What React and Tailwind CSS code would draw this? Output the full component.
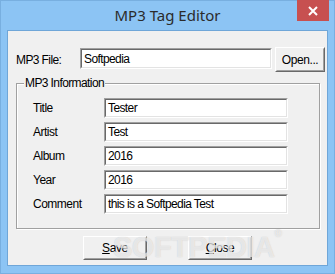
import React from "react";

const font = { fontFamily: '"Liberation Sans", Arial, sans-serif' };

const Field = ( { value, className = "" } ) => (
  <div className={ `border border-t-[#a0a0a0] border-l-[#a0a0a0] border-b-white border-r-white ${ className }` }>
    <div className="h-full border border-t-[#696969] border-l-[#696969] border-b-[#e3e3e3] border-r-[#e3e3e3] bg-white px-[2px] flex items-center text-[12px] tracking-[-0.6px] text-black leading-none">
      { value }
    </div>
  </div>
);

const Btn = ( { children, className = "" } ) => (
  <div className={ `border border-t-white border-l-white border-b-[#696969] border-r-[#696969] ${ className }` }>
    <div className="h-full border border-t-[#f0f0f0] border-l-[#f0f0f0] border-b-[#a0a0a0] border-r-[#a0a0a0] bg-[#f0f0f0] flex items-center justify-center text-[12px] tracking-[-0.4px] text-black leading-none">
      { children }
    </div>
  </div>
);

const rows = [
  [ "Title", "Tester" ],
  [ "Artist", "Test" ],
  [ "Album", "2016" ],
  [ "Year", "2016" ],
  [ "Comment", "this is a Softpedia Test" ],
];

export default function App() {
  return (
    <div className="relative w-[335px] h-[274px] bg-[#8cc4f4] border border-[#78afe0] flex flex-col" style={ font }>
      {/* title bar */ }
      <div className="relative h-[29px] flex items-center justify-center">
        <span className="text-[15px] text-[#2b2b2b] -mt-[1px]" style={ { fontFamily: '"Noto Sans", "Open Sans", sans-serif' } }>
          MP3 Tag Editor
        </span>
        <div className="absolute -top-[1px] left-[296px] w-[32px] h-[21px] bg-[#c75050] flex items-center justify-center">
          <svg width="10" height="10" viewBox="0 0 10 10">
            <path d="M1 1 L9 9 M9 1 L1 9" stroke="white" strokeWidth="2" />
          </svg>
        </div>
      </div>

      {/* client */ }
      <div className="ml-[6px] w-[321px] h-[236px] border border-[#6fa6d8] bg-[#f0f0f0] flex flex-col">
        <div className="mt-[16px] flex items-start">
          <span className="ml-[8px] w-[64px] self-center text-[12px] tracking-[-0.6px] text-black">MP3 File:</span>
          <Field value="Softpedia" className="mt-[1px] w-[192px] h-[21px]" />
          <Btn className="ml-[3px] w-[50px] h-[25px]">Open...</Btn>
        </div>

        <div className="relative mt-[11px] ml-[8px] w-[304px] h-[146px] border border-[#a0a0a0] shadow-[inset_1px_1px_0_#fff,1px_1px_0_#fff] flex flex-col gap-[4px] pt-[14px]">
          <span className="absolute -top-[8px] left-[7px] bg-[#f0f0f0] px-[1px] text-[12px] tracking-[-0.6px] text-black leading-[14px]">
            MP3 Information
          </span>
          { rows.map( ( [ label, value ] ) => (
            <div key={ label } className="flex items-center h-[20px]">
              <span className="ml-[16px] w-[71px] text-[12px] tracking-[-0.5px] text-black">{ label }</span>
              <Field value={ value } className="w-[184px] h-[20px]" />
            </div>
          ) ) }
        </div>

        <div className="mt-[7px] ml-[75px] flex gap-[41px]">
          <Btn className="w-[64px] h-[24px]"><span><span className="underline">S</span>ave</span></Btn>
          <Btn className="w-[64px] h-[24px]"><span><span className="underline">C</span>lose</span></Btn>
        </div>
      </div>

      {/* watermark */ }
      <div className="absolute left-[112px] top-[225px] text-[29px] font-bold tracking-[-0.5px] text-white/60 pointer-events-none [text-shadow:0_0_1px_rgba(150,150,150,0.5)]" style={ { fontFamily: '"Liberation Sans", Arial, sans-serif' } }>
        SOFTPEDIA<span className="text-[10px] align-top">®</span>
      </div>
    </div>
  );
}
